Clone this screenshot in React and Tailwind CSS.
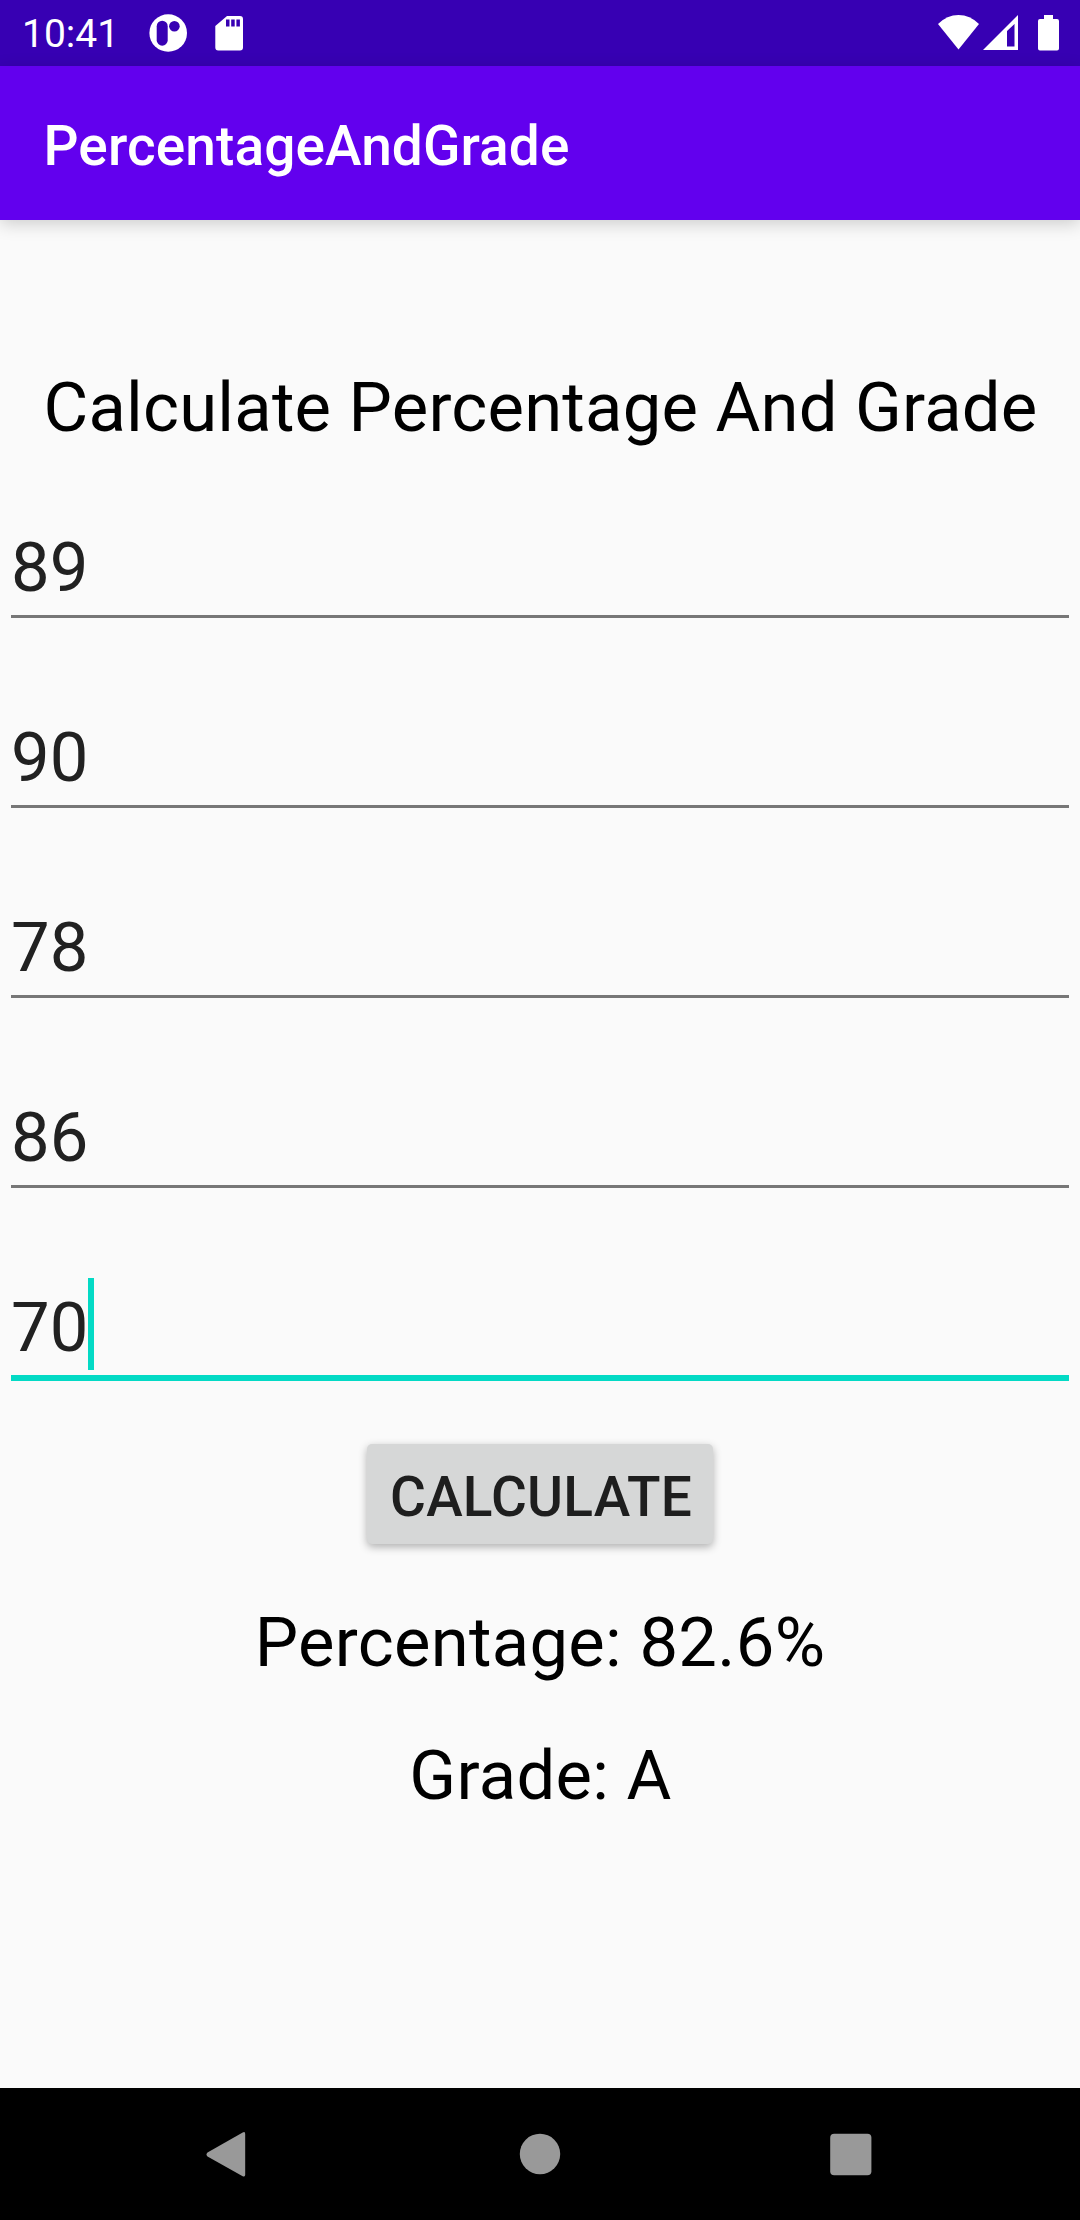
const values = ["89", "90", "78", "86", "70"];

function StatusBar() {
  return (
    <div className="flex h-[66px] items-center bg-[#3700b3] pl-[22px] pr-[21px] text-white">
      <span className="w-[127px] pt-[3px] text-[39px] leading-none">10:41</span>
      <svg className="size-[38px]" viewBox="0 0 38 38">
        <circle cx="19.2" cy="19" r="18.8" fill="#fff" />
        <rect x="7.7" y="6.7" width="11" height="25" rx="5.5" fill="#3700b3" />
        <circle cx="25.4" cy="12.3" r="5.3" fill="#3700b3" />
      </svg>
      <svg className="ml-[28px] h-[36px] w-[29px]" viewBox="0 0 29 36">
        <path d="M12 1h13a3 3 0 0 1 3 3v28.5a3 3 0 0 1-3 3H3.3a3 3 0 0 1-3-3V11z" fill="#fff" />
        <path d="M11 4.5h3.5v7H11zM16.200 4.500h3.500v7h-3.500zM21.400 4.500h3.500v7h-3.500z" fill="#3700b3" />
      </svg>
      <svg className="ml-auto h-[36px] w-[121px]" viewBox="0 0 121 36" fill="#fff">
        <path d="M0 9Q9 0 20.5 0T41 9L20.5 34.5z" />
        <path d="M80 0v35H45zM69 16v15.500h7.500V9z" fillRule="evenodd" />
        <path d="M106 0h9v4h4a2 2 0 0 1 2 2v27.500a2 2 0 0 1-2 2h-17a2 2 0 0 1-2-2V6a2 2 0 0 1 2-2h4z" />
      </svg>
    </div>
  );
}

function Field({ value, active }) {
  return (
    <div className="h-[190px] px-[11px] pt-[20px]">
      <div className="flex h-[109px] items-start text-[68.75px] leading-[92px] text-[#212121]">
        <span className="mt-[16px] w-[77px]">{value}</span>
        {active && <span className="mt-[12px] h-[92px] w-[6px] bg-[#03dac5]" />}
      </div>
      <div className={active ? "h-[6px] bg-[#03dac5]" : "h-[3px] bg-[#777]"} />
    </div>
  );
}

export default function App() {
  return (
    <div className="flex h-[2220px] w-[1080px] flex-col bg-[#fafafa] font-['Roboto',sans-serif] text-black">
      <StatusBar />
      <header className="flex h-[154px] items-center bg-[#6200ee] pl-[43.5px] pt-[6px] text-[55px] font-medium tracking-[0.1px] text-white shadow-[0_4px_16px_rgba(0,0,0,0.18)]">PercentageAndGrade</header>
      <main className="flex flex-1 flex-col">
        <h1 className="mt-[142px] h-[92px] whitespace-nowrap pl-[1px] text-center text-[68.75px] leading-[92px] tracking-[0.22px]">Calculate Percentage And Grade</h1>
        <div className="mt-[32px] h-[958px]">
          {values.map((v, i) => <Field key={i} value={v} active={i === 4} />)}
        </div>
        <button className="mx-auto h-[100px] w-[346px] rounded-[5px] bg-[#d6d7d7] pl-[2px] pt-[6px] text-[55px] font-medium tracking-[0.2px] text-[#1e1e1e] shadow-[0_3px_8px_rgba(0,0,0,0.3)]">CALCULATE</button>
        <p className="mt-[53px] text-center text-[68.75px] leading-[92px] tracking-[0.3px]">Percentage: 82.6%</p>
        <p className="mt-[41px] pl-[1px] text-center text-[68.75px] leading-[92px] tracking-[0.3px]">Grade: A</p>
      </main>
      <nav className="flex h-[132px] items-center bg-black">
        <svg className="ml-[205px] h-[46px] w-[668px]" viewBox="0 0 668 46" fill="#999">
          <path d="M40.200 3v40.500q0 3-2.500 1.700L2.500 25.500q-2-2 0-4L37.700 1.500q2.500-1.300 2.500 1.500z" />
          <circle cx="335" cy="23" r="20.2" />
          <rect x="625.2" y="2.700" width="41.200" height="41.500" rx="4" />
        </svg>
      </nav>
    </div>
  );
}
